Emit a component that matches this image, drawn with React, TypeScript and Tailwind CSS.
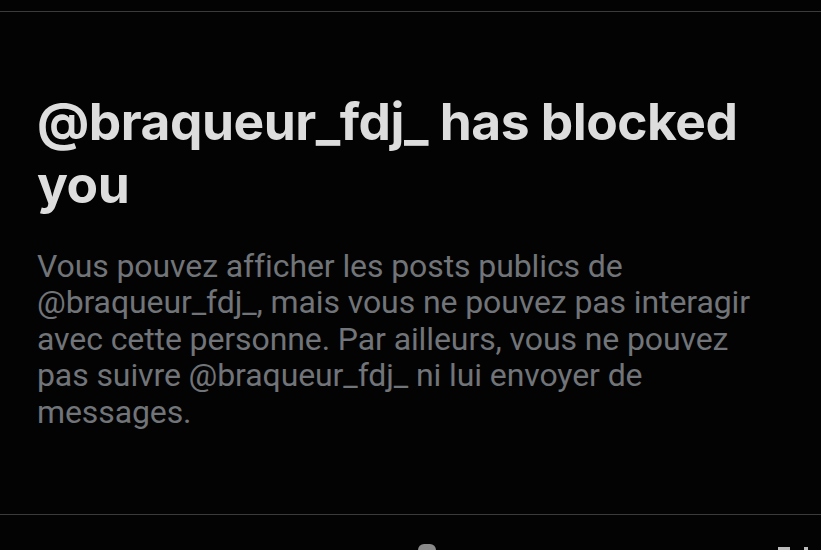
export default function App() {
  return (
    <div className="flex h-[550px] w-[821px] flex-col overflow-hidden bg-[#030303] font-['Inter',sans-serif]">
      <div className="h-[11px] shrink-0" />
      <div className="h-px shrink-0 bg-[#3b3b3b]" />
      <div className="flex flex-1 flex-col px-[37px] pt-[77.5px]">
        <h1 className="text-[51.5px] leading-[63px] font-bold tracking-[-0.5px] text-[#dddddd]">
          @braqueur_fdj_ has blocked
          <br />
          you
        </h1>
        <p className="mt-[32px] font-['Roboto',sans-serif] text-[32px] leading-[36.5px] tracking-[-0.1px] text-[#717478]">
          Vous pouvez afficher les posts publics de
          <br />
          @braqueur_fdj_, mais vous ne pouvez pas interagir
          <br />
          avec cette personne. Par ailleurs, vous ne pouvez
          <br />
          pas suivre @braqueur_fdj_ ni lui envoyer de
          <br />
          messages.
        </p>
      </div>
      <div className="h-px shrink-0 bg-[#3b3b3b]" />
      <div className="relative h-[35px] shrink-0">
        <div className="absolute left-[418px] top-[29px] h-[12px] w-[18px] rounded-full bg-[#8a8a8a]" />
        <div className="absolute left-[778px] top-[32px] h-[6px] w-[12px] bg-[#bbbbbb]" />
        <div className="absolute left-[804px] top-[32px] h-[6px] w-[4px] bg-[#bbbbbb]" />
      </div>
    </div>
  );
}
